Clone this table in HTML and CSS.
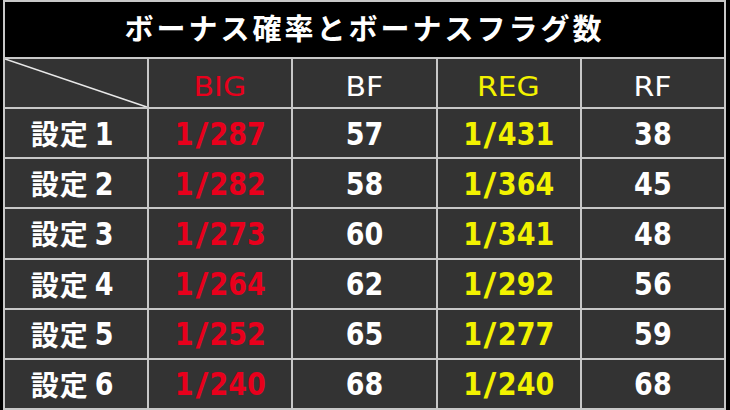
FILE: index.html
```html
<!DOCTYPE html>
<html lang="ja">
<head>
<meta charset="utf-8">
<link rel="stylesheet" href="styles.css">
</head>
<body>
<div class="board">
  <div class="title">ボーナス確率とボーナスフラグ数</div>

  <div class="cell corner">
    <svg class="diag" viewBox="0 0 100 100" preserveAspectRatio="none"><line x1="0" y1="0" x2="100" y2="100"/></svg>
  </div>
  <div class="cell head red"><span class="hx">BIG</span></div>
  <div class="cell head white"><span class="hx">BF</span></div>
  <div class="cell head yellow"><span class="hx">REG</span></div>
  <div class="cell head white"><span class="hx">RF</span></div>

  <div class="cell label"><span class="jp">設定</span><span class="num dg">1</span></div>
  <div class="cell red"><span class="num">1<span class="sl">/</span>287</span></div>
  <div class="cell white"><span class="num">57</span></div>
  <div class="cell yellow"><span class="num">1<span class="sl">/</span>431</span></div>
  <div class="cell white"><span class="num">38</span></div>

  <div class="cell label"><span class="jp">設定</span><span class="num dg">2</span></div>
  <div class="cell red"><span class="num">1<span class="sl">/</span>282</span></div>
  <div class="cell white"><span class="num">58</span></div>
  <div class="cell yellow"><span class="num">1<span class="sl">/</span>364</span></div>
  <div class="cell white"><span class="num">45</span></div>

  <div class="cell label"><span class="jp">設定</span><span class="num dg">3</span></div>
  <div class="cell red"><span class="num">1<span class="sl">/</span>273</span></div>
  <div class="cell white"><span class="num">60</span></div>
  <div class="cell yellow"><span class="num">1<span class="sl">/</span>341</span></div>
  <div class="cell white"><span class="num">48</span></div>

  <div class="cell label"><span class="jp">設定</span><span class="num dg">4</span></div>
  <div class="cell red"><span class="num">1<span class="sl">/</span>264</span></div>
  <div class="cell white"><span class="num">62</span></div>
  <div class="cell yellow"><span class="num">1<span class="sl">/</span>292</span></div>
  <div class="cell white"><span class="num">56</span></div>

  <div class="cell label"><span class="jp">設定</span><span class="num dg">5</span></div>
  <div class="cell red"><span class="num">1<span class="sl">/</span>252</span></div>
  <div class="cell white"><span class="num">65</span></div>
  <div class="cell yellow"><span class="num">1<span class="sl">/</span>277</span></div>
  <div class="cell white"><span class="num">59</span></div>

  <div class="cell label"><span class="jp">設定</span><span class="num dg">6</span></div>
  <div class="cell red"><span class="num">1<span class="sl">/</span>240</span></div>
  <div class="cell white"><span class="num">68</span></div>
  <div class="cell yellow"><span class="num">1<span class="sl">/</span>240</span></div>
  <div class="cell white"><span class="num">68</span></div>
</div>
</body>
</html>
```

FILE: styles.css
```css
html, body {
  margin: 0;
  padding: 0;
  background: #000;
}

body {
  width: 730px;
  height: 410px;
  overflow: hidden;
}

.board {
  box-sizing: border-box;
  width: 723px;
  height: 410px;
  margin-left: 3px;
  display: grid;
  grid-template-columns: repeat(5, 1fr);
  grid-template-rows: 55px repeat(7, 1fr);
  gap: 2px;
  background: #c8c8c8;
  border: 2px solid #c8c8c8;
}

.title {
  grid-column: 1 / -1;
  background: #000;
  color: #fff;
  display: flex;
  align-items: center;
  justify-content: center;
  font-family: "Noto Sans CJK JP", sans-serif;
  font-weight: 700;
  font-size: 29px;
  letter-spacing: 3px;
  padding-bottom: 6px;
  box-sizing: border-box;
}

.cell {
  background: #333;
  display: flex;
  align-items: center;
  justify-content: center;
  min-width: 0;
  min-height: 0;
  overflow: hidden;
}

.corner {
  padding: 0;
}

.diag {
  display: block;
  width: 100%;
  height: 100%;
}

.diag line {
  stroke: #e8e8e8;
  stroke-width: 1.6;
  vector-effect: non-scaling-stroke;
}

.head {
  padding-top: 8px;
  box-sizing: border-box;
}

.hx {
  display: inline-block;
  font-family: "DejaVu Sans", sans-serif;
  font-size: 26px;
  transform: scaleX(1.15);
}

.num {
  display: inline-block;
  font-family: "DejaVu Sans", sans-serif;
  font-weight: 700;
  font-size: 27px;
  transform: scaleY(1.2);
}

.sl {
  display: inline-block;
  margin: 0 3px;
  transform: scaleX(1.3);
}

.label {
  color: #fff;
  padding-right: 8px;
  box-sizing: border-box;
}

.jp {
  font-family: "Noto Sans CJK JP", sans-serif;
  font-weight: 700;
  font-size: 28px;
  letter-spacing: 1px;
}

.dg {
  margin-left: 6px;
}

.red { color: #e8001c; }
.white { color: #fff; }
.yellow { color: #f2f200; }
```
